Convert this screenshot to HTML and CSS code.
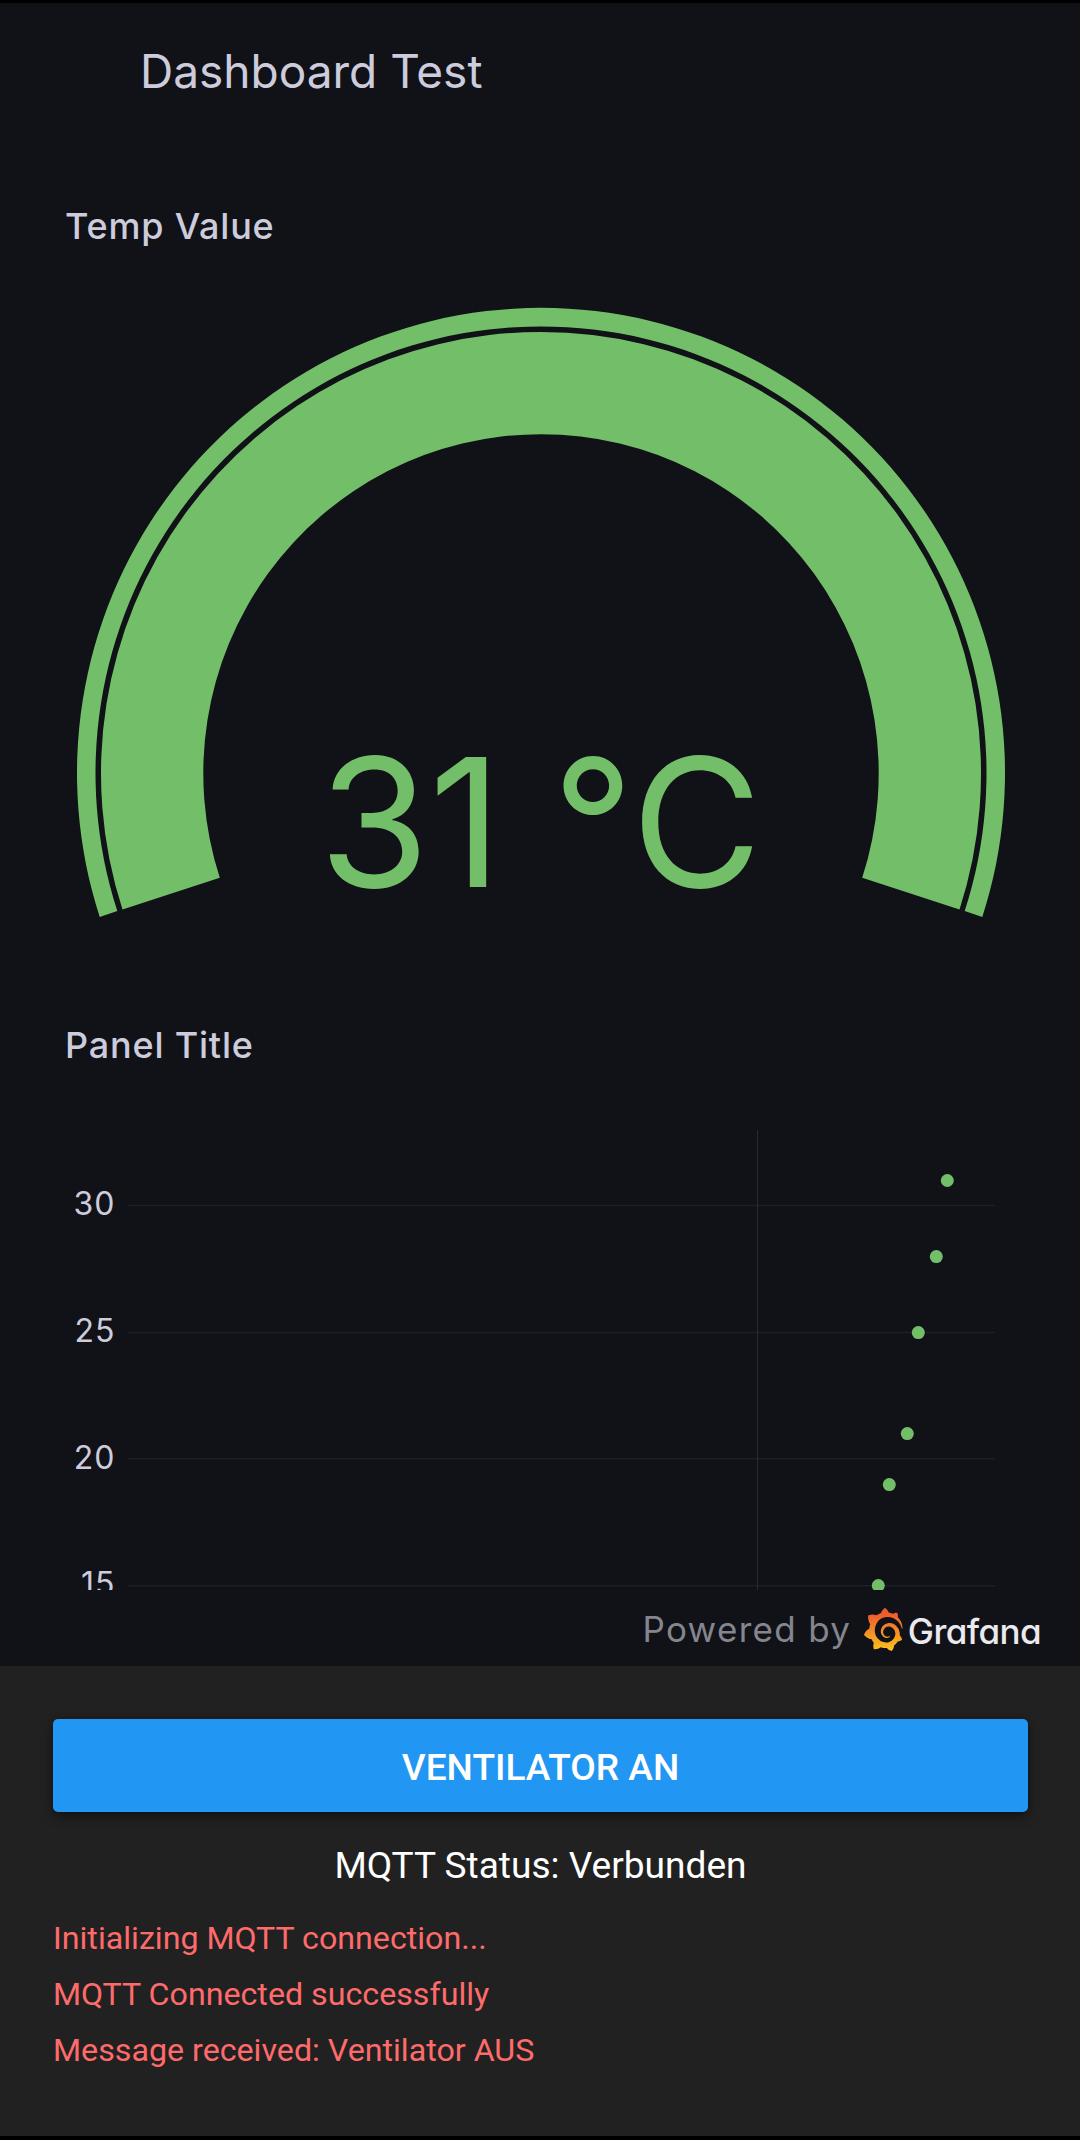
FILE: index.html
```html
<!DOCTYPE html>
<html lang="de">
<head>
<meta charset="utf-8">
<title>Dashboard Test</title>
<link rel="stylesheet" href="styles.css">
</head>
<body>
<main class="dashboard">
  <header class="dashboard-header">
    <h1 class="dashboard-title">Dashboard Test</h1>
  </header>

  <section class="panel panel-gauge">
    <h2 class="panel-title">Temp Value</h2>
    <svg class="gauge" viewBox="0 256 1080 700" role="img" aria-label="31 °C">
      <!-- threshold ring -->
      <path class="gauge-fill" d="M99.7 916.9A464 465.3 0 1 1 982.3 916.9L964.7 911.1A445.5 446.7 0 1 0 117.3 911.1Z"/>
      <!-- value ring -->
      <path class="gauge-fill" d="M122.5 909.5A440 441.3 0 1 1 959.5 909.5L862.2 877.8A337.7 339 0 1 0 219.8 877.8Z"/>
      <text class="gauge-value" x="540.5" y="887">31 °C</text>
    </svg>
  </section>

  <section class="panel panel-chart">
    <h2 class="panel-title">Panel Title</h2>
    <svg class="chart" viewBox="0 1076 1080 513.5">
      <g class="grid-h">
        <path d="M128 1205.5H995"/>
        <path d="M128 1332.5H995"/>
        <path d="M128 1458.8H995"/>
        <path d="M128 1585.8H995"/>
      </g>
      <path class="grid-v" d="M757.5 1130V1590"/>
      <g class="axis-label">
        <text x="115.5" y="1215.2">30</text>
        <text x="115.5" y="1342">25</text>
        <text x="115.5" y="1468.5">20</text>
        <text x="115.5" y="1594.5">15</text>
      </g>
      <g class="points">
        <circle cx="947.3" cy="1180.5" r="6.5"/>
        <circle cx="936.3" cy="1256.6" r="6.5"/>
        <circle cx="918.3" cy="1332.6" r="6.5"/>
        <circle cx="907.3" cy="1433.6" r="6.5"/>
        <circle cx="889.3" cy="1484.6" r="6.5"/>
        <circle cx="878.3" cy="1585.5" r="6.5"/>
      </g>
    </svg>
  </section>

  <footer class="powered">
    <span class="powered-label">Powered by</span>
    <svg class="powered-logo" viewBox="0.95 0 22.1 24" preserveAspectRatio="none" aria-hidden="true">
      <defs>
        <linearGradient id="flame" x1="0" y1="0" x2="0" y2="1">
          <stop offset="0.15" stop-color="#ee5c2c"/>
          <stop offset="1" stop-color="#fbc41c"/>
        </linearGradient>
      </defs>
      <path fill="url(#flame)" d="M23.02 10.59a8.578 8.578 0 0 0-.862-3.034 8.911 8.911 0 0 0-1.789-2.445c.337-1.342-.413-2.505-.413-2.505-1.292-.08-2.113.4-2.416.62-.052-.02-.102-.044-.154-.064-.22-.089-.446-.172-.677-.247-.231-.073-.47-.14-.711-.197a9.867 9.867 0 0 0-.875-.161C14.557.753 12.94 0 12.94 0c-1.804 1.145-2.147 2.744-2.147 2.744l-.018.093c-.098.029-.2.057-.298.088-.138.042-.275.094-.413.143-.138.055-.275.107-.41.166a8.869 8.869 0 0 0-1.557.87l-.063-.029c-2.497-.955-4.716.195-4.716.195-.203 2.658.996 4.33 1.235 4.636a11.608 11.608 0 0 0-.607 2.635C1.636 12.677.953 15.014.953 15.014c1.926 2.214 4.171 2.351 4.171 2.351.003-.002.006-.002.006-.005.285.509.615.994.986 1.446.156.19.32.371.488.548-.704 2.009.099 3.68.099 3.68 2.144.08 3.553-.937 3.849-1.173a9.784 9.784 0 0 0 3.164.501h.08l.055-.003.107-.002.103-.005.003.002c1.01 1.44 2.788 1.646 2.788 1.646 1.264-1.332 1.337-2.653 1.337-2.94v-.058c0-.02-.003-.039-.003-.06.265-.187.52-.387.758-.6a7.875 7.875 0 0 0 1.415-1.7c1.43.083 2.437-.885 2.437-.885-.236-1.49-1.085-2.216-1.264-2.354l-.018-.013-.016-.013a.217.217 0 0 1-.031-.02c.008-.092.016-.18.02-.27.011-.162.016-.323.016-.48v-.253l-.005-.098-.008-.135a1.891 1.891 0 0 0-.01-.13c-.003-.042-.008-.083-.013-.125l-.016-.124-.018-.122a6.215 6.215 0 0 0-2.032-3.73 6.015 6.015 0 0 0-3.222-1.46 6.292 6.292 0 0 0-.85-.048l-.107.002h-.063l-.044.003-.104.008a4.777 4.777 0 0 0-3.335 1.695c-.332.4-.592.84-.768 1.297a4.594 4.594 0 0 0-.312 1.817l.003.091c.005.055.007.11.013.164a3.615 3.615 0 0 0 .698 1.82 3.53 3.53 0 0 0 1.827 1.282c.33.098.66.14.971.137.039 0 .078 0 .114-.002l.063-.003c.02 0 .041-.003.062-.003.034-.002.065-.007.099-.01.007 0 .018-.003.028-.003l.031-.005.06-.008a1.18 1.18 0 0 0 .112-.02c.036-.008.072-.013.109-.024a2.634 2.634 0 0 0 .914-.415c.028-.02.056-.041.085-.065a.248.248 0 0 0 .039-.35.244.244 0 0 0-.309-.06l-.078.042c-.09.044-.184.083-.283.116a2.476 2.476 0 0 1-.475.096c-.028.003-.054.006-.083.006l-.083.002c-.026 0-.054 0-.08-.002l-.102-.006h-.012l-.024.006c-.016-.003-.031-.003-.044-.006-.031-.002-.06-.007-.091-.01a2.59 2.59 0 0 1-.724-.213 2.557 2.557 0 0 1-.667-.438 2.52 2.52 0 0 1-.805-1.475 2.306 2.306 0 0 1-.029-.444l.006-.122v-.023l.002-.031c.003-.021.003-.04.005-.06a3.163 3.163 0 0 1 1.352-2.29 3.12 3.12 0 0 1 .937-.43 2.946 2.946 0 0 1 .776-.101h.06l.07.002.045.003h.026l.07.005a4.041 4.041 0 0 1 1.635.49 3.94 3.94 0 0 1 1.602 1.662 3.77 3.77 0 0 1 .397 1.414l.005.076.003.075c.002.026.002.05.002.075 0 .024.003.052 0 .07v.065l-.002.073-.008.174a6.195 6.195 0 0 1-.08.639 5.1 5.1 0 0 1-.267.927 5.31 5.31 0 0 1-.624 1.13 5.052 5.052 0 0 1-3.237 2.014 4.82 4.82 0 0 1-.649.066l-.039.003h-.287a6.607 6.607 0 0 1-1.716-.265 6.776 6.776 0 0 1-3.4-2.274 6.75 6.75 0 0 1-.746-1.15 6.616 6.616 0 0 1-.714-2.596l-.005-.083-.002-.02v-.056l-.003-.073v-.096l-.003-.104v-.07l.003-.163c.008-.22.026-.45.054-.678a8.707 8.707 0 0 1 .28-1.355c.128-.444.286-.872.473-1.277a7.04 7.04 0 0 1 1.456-2.1 5.925 5.925 0 0 1 .953-.763c.169-.111.343-.213.524-.306.089-.05.182-.091.273-.135.047-.02.093-.042.138-.062a7.177 7.177 0 0 1 .714-.267l.145-.045c.049-.015.098-.026.148-.041.098-.029.197-.052.296-.076.049-.013.1-.02.15-.033l.15-.032.151-.028.076-.013.075-.01.153-.024c.057-.01.114-.013.171-.023l.169-.021c.036-.003.073-.008.106-.01l.073-.008.036-.003.042-.002c.057-.003.114-.008.171-.01l.086-.006h.023l.037-.003.145-.007a7.999 7.999 0 0 1 1.708.125 7.917 7.917 0 0 1 2.048.68 8.253 8.253 0 0 1 1.672 1.09l.09.077.089.078c.06.052.114.107.171.159.057.052.112.106.166.16.052.055.107.107.159.164a8.671 8.671 0 0 1 1.41 1.978c.012.026.028.052.04.078l.04.078.075.156c.023.051.05.1.07.153l.065.15a8.848 8.848 0 0 1 .45 1.34.19.19 0 0 0 .201.142.186.186 0 0 0 .172-.184c.01-.246.002-.532-.024-.856z"/>
    </svg>
    <span class="powered-name">Grafana</span>
  </footer>
</main>

<section class="controls">
  <button class="fan-button" type="button">VENTILATOR AN</button>
  <p class="status">MQTT Status: Verbunden</p>
  <ul class="log">
    <li>Initializing MQTT connection...</li>
    <li>MQTT Connected successfully</li>
    <li>Message received: Ventilator AUS</li>
  </ul>
</section>
</body>
</html>
```
FILE: styles.css
```css
* {
  box-sizing: border-box;
}

body {
  margin: 0;
  padding: 3px 0 4px;
  height: 2140px;
  background: #000;
  display: flex;
  flex-direction: column;
  overflow: hidden;
}

h1, h2, p, ul {
  margin: 0;
  padding: 0;
}

svg {
  display: block;
}

/* Dashboard */

.dashboard {
  height: 1663px;
  display: flex;
  flex-direction: column;
  background: #111217;
  color: #ccccdc;
  font-family: Inter, "Liberation Sans", sans-serif;
}

.dashboard-header {
  height: 193px;
  padding: 38px 0 0 140px;
}

.dashboard-title {
  font-size: 46px;
  line-height: 60px;
  font-weight: 400;
}

.panel-title {
  padding-left: 65px;
  font-size: 36px;
  line-height: 60px;
  font-weight: 500;
  letter-spacing: 0.8px;
}

.panel-gauge {
  height: 819px;
}

.panel-chart {
  display: flex;
  flex-direction: column;
  gap: 1px;
}

.gauge {
  width: 1080px;
  height: 700px;
}

.gauge-fill {
  fill: #73bf69;
}

.gauge-value {
  fill: #73bf69;
  font-size: 178.5px;
  text-anchor: middle;
}

.chart {
  width: 1080px;
  height: 513.5px;
}

.grid-h {
  stroke: #1e1f24;
  stroke-width: 1.4;
}

.grid-v {
  stroke: #292a2f;
  stroke-width: 1;
}

.axis-label {
  fill: #ccccdc;
  font-size: 32px;
  letter-spacing: 1px;
  text-anchor: end;
}

.points {
  fill: #73bf69;
}

.powered {
  flex: 1;
  display: flex;
  align-items: center;
  justify-content: flex-end;
  padding: 3px 39px 0 0;
}

.powered-label {
  color: #85858e;
  font-size: 35px;
  line-height: 44px;
  letter-spacing: 1.33px;
}

.powered-logo {
  width: 38.5px;
  height: 43px;
  margin: 0 5px 0 13px;
}

.powered-name {
  padding-top: 4px;
  color: #e9e9ee;
  font-size: 35px;
  line-height: 44px;
  font-weight: 500;
  letter-spacing: -0.6px;
  font-feature-settings: "cv11";
}

/* MQTT controls */

.controls {
  flex: 1;
  padding: 53px 52px 0 53px;
  background: #212121;
  font-family: Roboto, "Liberation Sans", sans-serif;
}

.fan-button {
  display: block;
  width: 100%;
  height: 93px;
  padding: 5px 0 0;
  border: 0;
  border-radius: 5px;
  background: #2196f3;
  box-shadow: 0 5px 12px rgba(0, 0, 0, 0.4), 0 0 4px rgba(0, 0, 0, 0.25);
  color: #fff;
  font-family: inherit;
  font-size: 37.1px;
  line-height: 44px;
  font-weight: 500;
}

.status {
  margin-top: 32px;
  color: #fff;
  font-size: 37.1px;
  line-height: 44px;
  text-align: center;
}

.log {
  margin-top: 22px;
  list-style: none;
  color: #ff6b6b;
  font-size: 32.2px;
  line-height: 56px;
}
```
